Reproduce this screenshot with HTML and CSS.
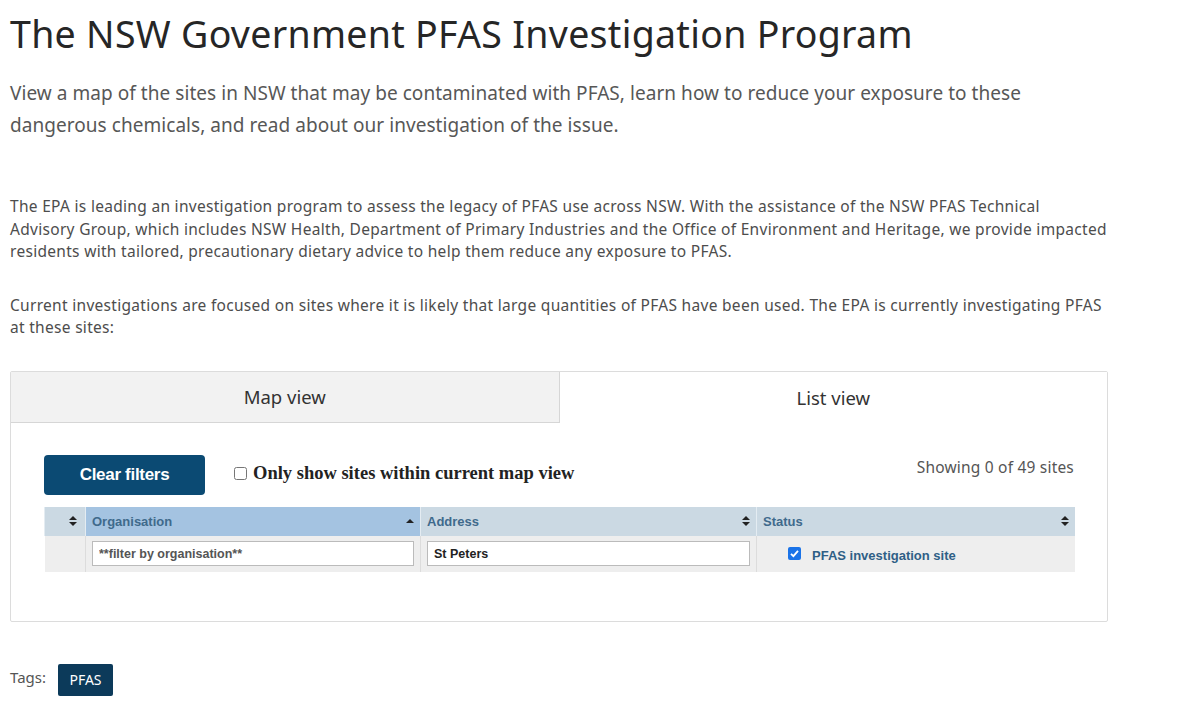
FILE: index.html
```html
<!DOCTYPE html>
<html lang="en">
<head>
<meta charset="utf-8">
<title>The NSW Government PFAS Investigation Program</title>
<link rel="stylesheet" href="styles.css">
</head>
<body>
<main class="page">
  <h1 class="title">The NSW Government PFAS Investigation Program</h1>
  <p class="lead">View a map of the sites in NSW that may be contaminated with PFAS, learn how to reduce your exposure to these dangerous chemicals, and read about our investigation of the issue.</p>
  <p class="body-text first">The EPA is leading an investigation program to assess the legacy of PFAS use across NSW. With the assistance of the NSW PFAS Technical Advisory Group, which includes NSW Health, Department of Primary Industries and the Office of Environment and Heritage, we provide impacted residents with tailored, precautionary dietary advice to help them reduce any exposure to PFAS.</p>
  <p class="body-text">Current investigations are focused on sites where it is likely that large quantities of PFAS have been used. The EPA is currently investigating PFAS at these sites:</p>

  <section class="tabs">
    <div class="tab-bar">
      <div class="tab">Map view</div>
      <div class="tab active">List view</div>
    </div>
    <div class="panel">
      <div class="toolbar">
        <button class="btn-clear" type="button">Clear filters</button>
        <label class="map-filter"><input type="checkbox" class="chk"> Only show sites within current map view</label>
        <span class="count">Showing 0 of 49 sites</span>
      </div>
      <table class="grid">
        <thead>
          <tr>
            <th class="c-idx"><span class="sort both"></span></th>
            <th class="c-org sorted"><div class="th-in"><span>Organisation</span><span class="sort up"></span></div></th>
            <th class="c-addr"><div class="th-in"><span>Address</span><span class="sort both"></span></div></th>
            <th class="c-status"><div class="th-in"><span>Status</span><span class="sort both"></span></div></th>
          </tr>
        </thead>
        <tbody>
          <tr class="filter-row">
            <td class="c-idx"></td>
            <td><input class="field" type="text" placeholder="**filter by organisation**"></td>
            <td><input class="field" type="text" value="St Peters"></td>
            <td class="status-cell"><label class="status-opt"><span class="tick"><svg width="13" height="13" viewBox="0 0 13 13"><rect width="13" height="13" rx="2" fill="#1a73e8"/><path d="M3 6.8 L5.4 9.2 L10 3.8" fill="none" stroke="#fff" stroke-width="1.8"/></svg></span>PFAS investigation site</label></td>
          </tr>
        </tbody>
      </table>
    </div>
  </section>

  <div class="tags">
    <span class="tags-label">Tags:</span>
    <span class="tag">PFAS</span>
  </div>
</main>
</body>
</html>
```

FILE: styles.css
```css
* { box-sizing: border-box; }
html, body { margin: 0; padding: 0; background: #fff; }
body { font-family: "Noto Sans", "Open Sans", sans-serif; color: #333; }
.page { padding: 0 0 0 10px; width: 1108px; }

.title {
  font-family: "Noto Sans", sans-serif;
  font-weight: 400;
  font-size: 37.5px;
  line-height: 44px;
  color: #262626;
  margin: 12px 0 0;
  letter-spacing: 0.3px;
}

.lead {
  font-size: 19px;
  line-height: 32px;
  color: #575757;
  margin: 21px 0 0;
  width: 1030px;
  letter-spacing: 0.05px;
}

.body-text {
  font-size: 15.5px;
  line-height: 22.5px;
  color: #4d4d4d;
  margin: 0;
  letter-spacing: 0.3px;
  width: 1098px;
}
.body-text.first { margin-top: 54px; }
.body-text + .body-text { margin-top: 31px; }

.tabs {
  margin-top: 32px;
  border: 1px solid #dcdcdc;
  border-radius: 2px;
  width: 1098px;
}
.tab-bar { display: flex; height: 51px; }
.tab {
  flex: 1;
  display: flex;
  align-items: center;
  justify-content: center;
  font-size: 18.5px;
  color: #333;
  background: #f2f2f2;
  border-right: 1px solid #d6d6d6;
  border-bottom: 1px solid #d6d6d6;
}
.tab.active { background: #fff; border: none; }

.panel { padding: 32px 33px 49px 33px; }

.toolbar { display: flex; align-items: flex-start; height: 52px; }
.btn-clear {
  width: 161px;
  height: 40px;
  background: #0b4a73;
  color: #fff;
  border: none;
  border-radius: 4px;
  font-family: "Liberation Sans", Arial, sans-serif;
  font-weight: 700;
  font-size: 17px;
  letter-spacing: -0.3px;
}
.map-filter {
  display: flex;
  align-items: center;
  margin-left: 29px;
  margin-top: 8px;
  font-family: "Liberation Serif", "Times New Roman", serif;
  font-weight: 700;
  font-size: 18.5px;
  color: #222;
}
.chk { width: 13px; height: 13px; margin: 0 6px 0 0; }
.count {
  margin-left: auto;
  margin-top: 1px;
  font-size: 15.5px;
  letter-spacing: 0.2px;
  color: #555;
}

.grid {
  width: 1031px;
  border-collapse: collapse;
  font-family: "Liberation Sans", Arial, sans-serif;
  font-size: 13px;
}
.grid th {
  height: 29px;
  background: #cbd9e3;
  color: #3f6a8c;
  font-weight: 700;
  text-align: left;
  padding: 0 6px;
  border-left: 1px solid #e4ecf2;
}
.grid th.sorted { background: #a4c3e1; }
.c-idx { width: 41px; }
.c-org { width: 335px; }
.c-addr { width: 336px; }
.th-in { display: flex; justify-content: space-between; align-items: center; }
.grid th.c-idx { text-align: right; padding-right: 8px; }

.sort { display: inline-block; width: 8px; height: 10px; position: relative; }
.sort.both::before, .sort.both::after, .sort.up::before {
  content: "";
  position: absolute;
  left: 0;
  border-left: 4px solid transparent;
  border-right: 4px solid transparent;
}
.sort.both::before { top: 0; border-bottom: 4px solid #222; }
.sort.both::after { bottom: 0; border-top: 4px solid #222; }
.sort.up::before { top: 3px; border-bottom: 4px solid #222; }

.filter-row td {
  height: 36px;
  background: #eeeeee;
  padding: 0 6px;
  border-left: 1px solid #dcdcdc;
}
.filter-row td:first-child { border-left: none; }
.field {
  width: 100%;
  height: 25px;
  border: 1px solid #bbb;
  background: #fff;
  padding: 0 6px;
  font-family: "Liberation Sans", Arial, sans-serif;
  font-weight: 700;
  font-size: 12.5px;
  color: #222;
}
.field::placeholder { color: #555; }
.status-cell { padding-left: 31px !important; }
.status-opt {
  display: flex;
  align-items: center;
  color: #2f5f86;
  font-weight: 700;
  font-size: 13px;
  padding-top: 3px;
}
.tick { display: inline-flex; margin-right: 11px; margin-top: -4px; }

.tags { display: flex; align-items: center; margin-top: 42px; }
.tags-label { font-size: 15px; color: #555; margin-right: 12px; margin-top: -6px; }
.tag {
  display: inline-flex;
  align-items: center;
  justify-content: center;
  width: 55px;
  height: 32px;
  background: #0c3a5a;
  color: #fff;
  border-radius: 2px;
  font-size: 14px;
}
```
